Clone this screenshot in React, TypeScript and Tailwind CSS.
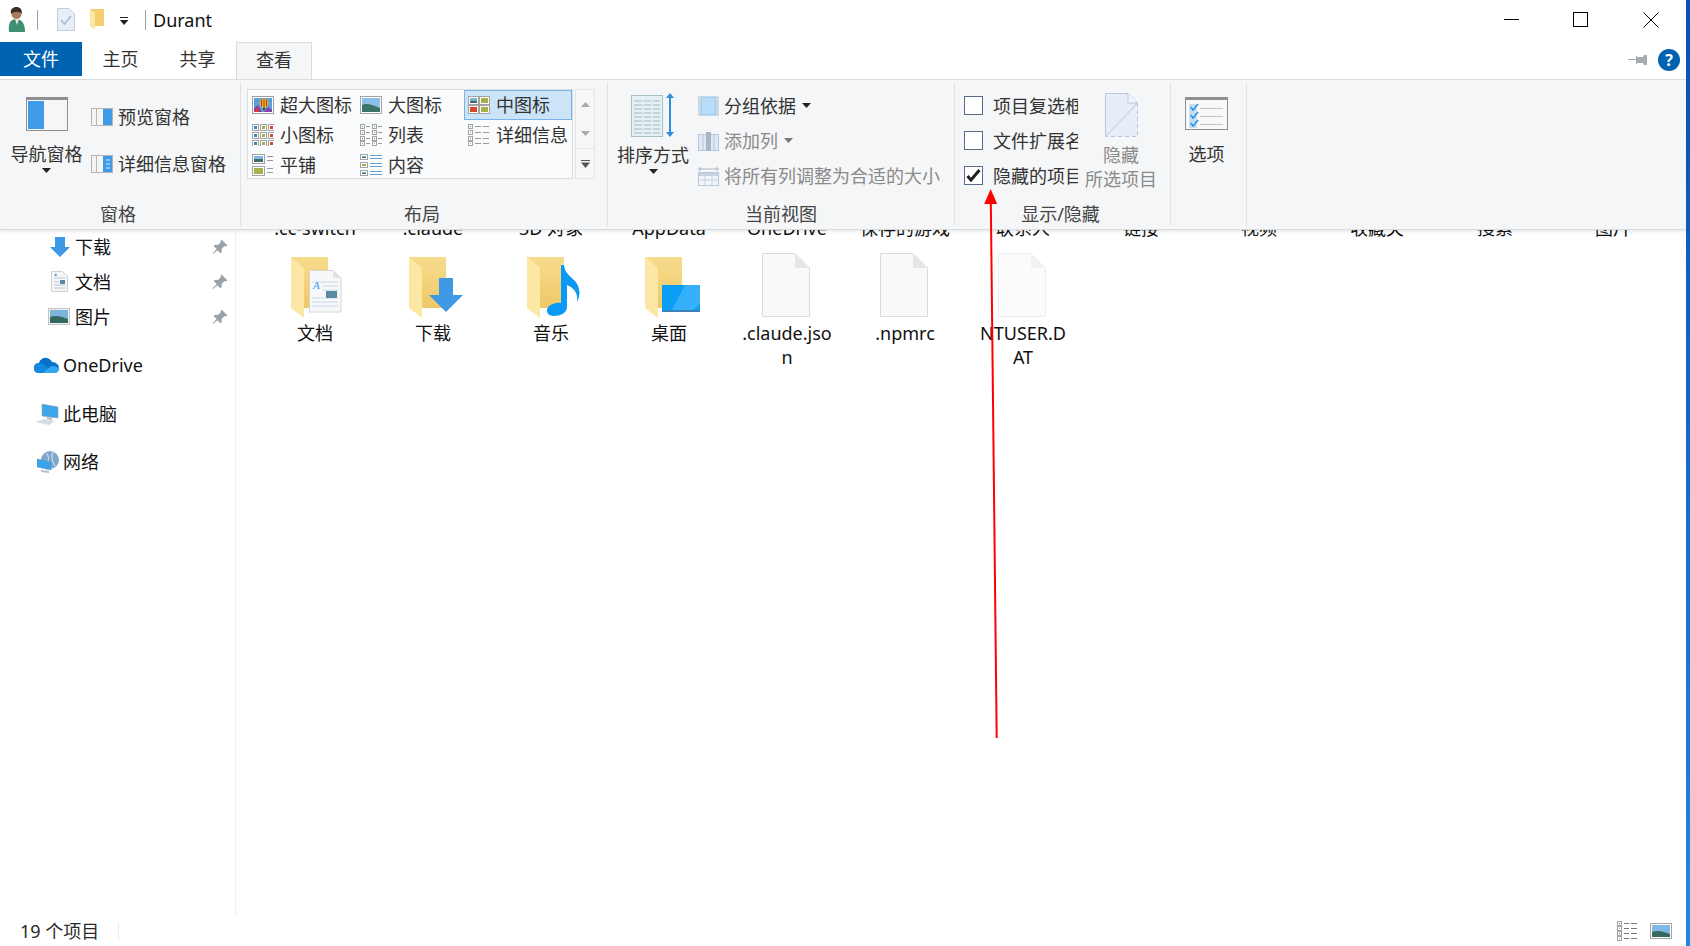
import React from "react";

const Caret = ({ gray }: { gray?: boolean }) => (
  <svg width="9" height="5" viewBox="0 0 9 5" className="shrink-0">
    <path d="M0 0h9L4.5 5z" fill={gray ? "#777" : "#222"} />
  </svg>
);

// little framed picture used all over the ribbon
const Pic = ({ x, y, w, h, kind = "land" }: { x: number; y: number; w: number; h: number; kind?: string }) => (
  <g>
    <rect x={x + 0.5} y={y + 0.5} width={w - 1} height={h - 1} fill="#fff" stroke="#a3a3a3" />
    {kind === "land" && (
      <>
        <rect x={x + 2} y={y + 2} width={w - 4} height={(h - 4) / 2} fill="#7db9e4" />
        <rect x={x + 2} y={y + 2 + (h - 4) / 2} width={w - 4} height={(h - 4) / 2} fill="#3d6f6a" />
      </>
    )}
    {kind === "red" && <rect x={x + 2} y={y + 2} width={w - 4} height={h - 4} fill="#d24a2a" />}
    {kind === "flower" && <rect x={x + 2} y={y + 2} width={w - 4} height={h - 4} fill="#a8b04a" />}
    {kind === "blue" && <rect x={x + 2} y={y + 2} width={w - 4} height={h - 4} fill="#3f86b8" />}
  </g>
);

const Lines = ({ x, ys, w, color = "#9a9a9a" }: { x: number; ys: number[]; w: number; color?: string }) => (
  <g stroke={color}>
    {ys.map((y) => (
      <line key={y} x1={x} x2={x + w} y1={y + 0.5} y2={y + 0.5} />
    ))}
  </g>
);

const IconXL = () => (
  <svg width="22" height="18" viewBox="0 0 22 18">
    <rect x="0.5" y="0.5" width="21" height="17" fill="#fff" stroke="#9c9c9c" />
    <rect x="2" y="2" width="18" height="14" fill="#5aa0d8" />
    <path d="M2 16v-4l4-3 4 7zM12 16l4-5 4 3v2z" fill="#8a3fa8" />
    <path d="M2 16l3-5 3 5z" fill="#d43a3a" />
    <circle cx="12" cy="7" r="4.5" fill="#e8b32a" />
    <path d="M12 2.500v9M9.500 4v6M14.500 4v6" stroke="#b0361f" />
    <rect x="11" y="12" width="2" height="2" fill="#5a3f2e" />
  </svg>
);
const IconL = () => (
  <svg width="22" height="18" viewBox="0 0 22 18">
    <rect x="0.5" y="0.5" width="21" height="17" fill="#fff" stroke="#a3a3a3" />
    <rect x="2" y="2" width="18" height="14" fill="#8cc0e6" />
    <path d="M2 9c4-2 8-1 18 3v4H2z" fill="#3a7468" />
  </svg>
);
const IconM = () => (
  <svg width="22" height="18" viewBox="0 0 22 18">
    <Pic x={0} y={0} w={11} h={9} />
    <Pic x={11} y={0} w={11} h={9} kind="flower" />
    <Pic x={0} y={9} w={11} h={9} kind="red" />
    <Pic x={11} y={9} w={11} h={9} kind="flower" />
  </svg>
);
const IconS = () => (
  <svg width="22" height="22" viewBox="0 0 22 22">
    {[0, 8, 16].map((y) =>
      [0, 8, 16].map((x, i) => <Pic key={`${x}-${y}`} x={x} y={y} w={7} h={7} kind={["blue", "flower", "red"][i]} />)
    )}
  </svg>
);
const IconList = () => (
  <svg width="22" height="22" viewBox="0 0 22 22">
    {[0, 12].map((x) => (
      <g key={x}>
        {[0, 6, 12, 17].map((y, i) => (
          <Pic key={y} x={x} y={y} w={5} h={5} kind={["blue", "flower", "red", "flower"][i]} />
        ))}
        <Lines x={x + 6} ys={[2, 8, 14, 19]} w={4} />
      </g>
    ))}
  </svg>
);
const IconDetails = () => (
  <svg width="22" height="22" viewBox="0 0 22 22">
    {[0, 6, 12, 17].map((y, i) => (
      <Pic key={y} x={0} y={y} w={5} h={5} kind={["blue", "flower", "red", "flower"][i]} />
    ))}
    <Lines x={7} ys={[2, 8, 14, 19]} w={6} />
    <Lines x={15} ys={[2, 8, 14, 19]} w={6} />
  </svg>
);
const IconTiles = () => (
  <svg width="22" height="22" viewBox="0 0 22 22">
    <Pic x={0} y={0} w={13} h={10} />
    <Pic x={0} y={12} w={13} h={10} kind="flower" />
    <Lines x={15} ys={[2, 6, 14, 18]} w={6} />
  </svg>
);
const IconContent = () => (
  <svg width="22" height="22" viewBox="0 0 22 22">
    <Pic x={0} y={0} w={8} h={6} />
    <Pic x={0} y={8} w={8} h={6} kind="flower" />
    <Pic x={0} y={16} w={8} h={6} />
    <Lines x={10} ys={[1, 4, 9, 12, 17, 20]} w={12} color="#6f9fd8" />
  </svg>
);

const NavPaneIcon = () => (
  <svg width="42" height="34" viewBox="0 0 42 34">
    <rect x="0.5" y="0.5" width="41" height="33" fill="#f6f6f6" stroke="#8f8f8f" />
    <rect x="0" y="0" width="42" height="3" fill="#8f8f8f" />
    <rect x="2" y="4" width="16" height="28" fill="#3f9be6" />
  </svg>
);
const PreviewIcon = ({ details }: { details?: boolean }) => (
  <svg width="22" height="18" viewBox="0 0 22 18">
    <rect x="0.5" y="0.5" width="21" height="17" fill="#f5f5f5" stroke="#b5b5b5" />
    <rect x="5" y="1" width="1" height="16" fill="#bbb" />
    <rect x="12" y="1" width="9" height="16" fill="#3f9be6" />
    {details && <path d="M15 5h4M15 9h4M15 13h4" stroke="#dceefb" />}
  </svg>
);
const SortIcon = () => (
  <svg width="44" height="46" viewBox="0 0 44 46">
    <rect x="0.5" y="3.5" width="31" height="41" fill="#e4f0f3" stroke="#a9c0c6" />
    <path d="M3 9h26M3 13h26M3 17h26M3 21h26M3 25h26M3 29h26M3 33h26M3 37h26M3 41h26" stroke="#a7b9bd" strokeDasharray="8 1.5" />
    <path d="M39 1l4 5h-3v34h3l-4 5-4-5h3V6h-3z" fill="#2f8ddb" />
  </svg>
);
const GroupIcon = () => (
  <svg width="21" height="22" viewBox="0 0 21 22">
    <rect x="3" y="2" width="15" height="18" fill="#b7dcfa" stroke="#8bbde6" />
    <path d="M1 1v20M20 1v20" stroke="#b5b5b5" />
  </svg>
);
const AddColIcon = () => (
  <svg width="21" height="20" viewBox="0 0 21 20">
    <rect x="0.5" y="3.5" width="20" height="16" fill="#dfe8f4" stroke="#b9c8dc" />
    <rect x="8" y="1" width="5" height="19" fill="#a9b6c8" />
    <path d="M5 4v15M16 4v15" stroke="#b9c8dc" />
  </svg>
);
const FitIcon = () => (
  <svg width="21" height="20" viewBox="0 0 21 20">
    <path d="M0 3h21M2 1v4M19 1v4" stroke="#a9b6c8" />
    <rect x="0.5" y="6.5" width="20" height="13" fill="#f1f4f8" stroke="#b9c8dc" />
    <rect x="1" y="7" width="19" height="3" fill="#c5d2e2" />
    <path d="M7 10v9M14 10v9M1 14h19" stroke="#c5d2e2" />
  </svg>
);
const HideIcon = () => (
  <svg width="33" height="44" viewBox="0 0 33 44">
    <path d="M0.5 0.5H23L32.5 10V43.5H0.5z" fill="#e7eefa" />
    <path d="M0.5 43.5V0.5H23L32.5 10L0.5 43.5" fill="none" stroke="#b9c6dd" />
    <path d="M32.5 10V43.5H0.5" fill="none" stroke="#b9c6dd" strokeDasharray="4 3" />
    <path d="M23 0.5V10H32.5" fill="#f4f7fc" stroke="#b9c6dd" />
  </svg>
);
const OptionsIcon = () => (
  <svg width="43" height="33" viewBox="0 0 43 33">
    <rect x="0.5" y="0.5" width="42" height="32" fill="#f8f8f8" stroke="#8f8f8f" />
    <rect x="0" y="0" width="43" height="3" fill="#8f8f8f" />
    {[8, 16, 24].map((y) => (
      <g key={y}>
        <rect x="5" y={y} width="6" height="6" fill="#cfe6fa" stroke="#9cc6ea" />
        <path d={`M6 ${y + 2}l2 3 5-6`} fill="none" stroke="#2f8ddb" strokeWidth="1.5" />
        <line x1="15" x2="38" y1={y + 3.5} y2={y + 3.5} stroke="#c4c4c4" />
      </g>
    ))}
  </svg>
);

const Check = ({ checked }: { checked?: boolean }) => (
  <div className="flex h-[19px] w-[19px] shrink-0 items-center justify-center border border-[#5a6a8a] bg-white">
    {checked && (
      <svg width="15" height="13" viewBox="0 0 15 13">
        <path d="M1.5 7l3.5 4 8.5-10" fill="none" stroke="#222" strokeWidth="3" />
      </svg>
    )}
  </div>
);

const PinSide = () => (
  <svg width="16" height="16" viewBox="0 0 16 16">
    <path d="M9.5 0.5l6 6-2 1-1-0.5-3 3 0.3 3-1.3 1.3-3-3L1 15l-0.5-0.5 4.2-4.5-3-3L3 5.700l3 0.300 3-3L8.500 2z" fill="#98a0a8" />
  </svg>
);

const Folder = ({ children }: { children?: React.ReactNode }) => (
  <svg width="62" height="62" viewBox="0 0 62 62">
    <defs>
      <linearGradient id="fb" x1="0" y1="0" x2="0" y2="1">
        <stop offset="0" stopColor="#f7dc8d" />
        <stop offset="1" stopColor="#efc867" />
      </linearGradient>
    </defs>
    <rect x="0" y="0" width="37" height="51" fill="url(#fb)" />
    <path d="M0 0l13 11v50L0 51z" fill="#fde7a4" />
    {children}
  </svg>
);

const FileIcon = ({ faded }: { faded?: boolean }) => (
  <svg width="48" height="64" viewBox="0 0 48 64" className={faded ? "opacity-50" : ""}>
    <path d="M0.500 0.500H33L47.500 15V63.500H0.500z" fill="#f9f9fa" stroke="#dcdcdc" />
    <path d="M33 0.500V15H47.500z" fill="#e6e6e6" />
  </svg>
);

const docOverlay = (
  <g>
    <path d="M18.500 13.500H42L50 21V55H18.500z" fill="#f7f8fa" stroke="#d6d6d6" />
    <path d="M42 13.500V21H50z" fill="#e2e2e2" />
    <path d="M21 25h26M32 29h15M32 33h15M21 41h26M21 45h26M21 49h26" stroke="#c8d8e6" />
    <text x="22" y="32" fontSize="11" fontStyle="italic" fontFamily="'Liberation Serif',serif" fill="#3f9be6">A</text>
    <rect x="35" y="34" width="11" height="7" fill="#5a8aa0" />
  </g>
);
const downOverlay = <path d="M30 21h14v17h10L37 55 20 38h10z" fill="#3f98e4" />;
const musicOverlay = (
  <path d="M37 8c1 8 5 10 11 16 5 6 6 14 2 21 1-7-1-13-10-17v22c0 6-7 9-13 9-5 0-7-3-7-5 0-5 6-9 14-8V8z" fill="#0a9af5" />
);
const desktopOverlay = (
  <g>
    <rect x="17" y="28" width="38" height="27" fill="#0a9ef7" />
    <path d="M40 28h15v19l-9 8H26z" fill="#37b0fa" />
    <rect x="17" y="53" width="38" height="2" fill="#3d7fb8" />
  </g>
);

const topRow = [".cc-switch", ".claude", "3D 对象", "AppData", "OneDrive", "保存的游戏", "联系人", "链接", "视频", "收藏夹", "搜索", "图片"];

const files: { name: string; icon: React.ReactNode; folder?: boolean }[] = [
  { name: "文档", icon: <Folder>{docOverlay}</Folder>, folder: true },
  { name: "下载", icon: <Folder>{downOverlay}</Folder>, folder: true },
  { name: "音乐", icon: <Folder>{musicOverlay}</Folder>, folder: true },
  { name: "桌面", icon: <Folder>{desktopOverlay}</Folder>, folder: true },
  { name: ".claude.json", icon: <FileIcon /> },
  { name: ".npmrc", icon: <FileIcon /> },
  { name: "NTUSER.DAT", icon: <FileIcon faded /> },
];

const gallery = [
  { label: "超大图标", icon: <IconXL /> },
  { label: "大图标", icon: <IconL /> },
  { label: "中图标", icon: <IconM />, active: true },
  { label: "小图标", icon: <IconS /> },
  { label: "列表", icon: <IconList /> },
  { label: "详细信息", icon: <IconDetails /> },
  { label: "平铺", icon: <IconTiles /> },
  { label: "内容", icon: <IconContent /> },
];

const QuickRow = ({ icon, label }: { icon: React.ReactNode; label: string }) => (
  <div className="flex h-[35px] items-center">
    <div className="flex w-[75px] shrink-0 justify-end pr-[5px]">{icon}</div>
    <span className="flex-1">{label}</span>
    <div className="mr-[7px]">
      <PinSide />
    </div>
  </div>
);

const NavRow = ({ icon, label, className }: { icon: React.ReactNode; label: string; className: string }) => (
  <div className={`flex h-9 items-center ${className}`}>
    <div className="flex w-[63px] shrink-0 justify-end pr-[4px]">{icon}</div>
    <span>{label}</span>
  </div>
);

export default function App() {
  return (
    <div className="relative flex h-[946px] w-[1690px] overflow-hidden bg-white font-['Noto_Sans','Noto_Sans_CJK_SC',sans-serif] text-[18px] leading-6 text-[#1a1a1a]">
      <div className="flex min-w-0 flex-1 flex-col">
        {/* title bar */}
        <div className="flex h-[42px] shrink-0 items-center pb-[3px]">
          <svg width="18" height="26" viewBox="0 0 18 26" className="ml-[8px]">
            <path d="M1 25c-1-8 1-13 7-13s9 5 9 13z" fill="#3f9070" />
            <circle cx="8.500" cy="7" r="5" fill="#a87a5c" />
            <path d="M3 7c-1-5 2-7 5.500-7S14 2 14 7c-2-3-8-3-11 0z" fill="#3a2c22" />
            <path d="M7 12l2 6 2-6z" fill="#e8e8e8" />
          </svg>
          <div className="ml-[11px] h-5 w-px bg-[#a0a0a0]" />
          <svg width="18" height="23" viewBox="0 0 18 23" className="ml-[19px]">
            <path d="M0.500 0.500H12L17.500 6V22.500H0.500z" fill="#e8eef8" stroke="#c2cde0" />
            <path d="M4 12l3.500 4L14 8" fill="none" stroke="#a8b8d2" strokeWidth="1.600" />
          </svg>
          <svg width="14" height="21" viewBox="0 0 14 21" className="ml-[15px]">
            <rect width="14" height="17" fill="#f3cd6e" />
            <path d="M0 0l5 4v17l-5-4z" fill="#fde7a4" />
          </svg>
          <svg width="11" height="9" viewBox="0 0 11 9" className="ml-[15px] mt-[4px]">
            <path d="M1 0h8v1H1zM1 3h8.500L5 8z" fill="#222" />
          </svg>
          <div className="ml-[15px] h-5 w-px bg-[#a0a0a0]" />
          <span className="ml-[7px] text-[#111]">Durant</span>
          <div className="ml-auto flex h-full">
            <div className="flex w-[70px] items-center justify-center">
              <div className="h-px w-[15px] bg-black" />
            </div>
            <div className="flex w-[69px] items-center justify-center">
              <div className="h-[15px] w-[15px] border border-black" />
            </div>
            <div className="flex w-[71px] items-center justify-center">
              <svg width="16" height="16" viewBox="0 0 16 16">
                <path d="M0.500 0.500l15 15M15.500 0.500l-15 15" stroke="#000" fill="none" />
              </svg>
            </div>
          </div>
        </div>

        {/* ribbon tabs */}
        <div className="flex h-[37px] shrink-0 items-start">
          <div className="flex h-[34px] w-[82px] items-center justify-center bg-[#0063b1] text-white">文件</div>
          <div className="flex h-[34px] w-[77px] items-center justify-center text-[#333]">主页</div>
          <div className="flex h-[34px] w-[77px] items-center justify-center text-[#333]">共享</div>
          <div className="flex h-[38px] w-[76px] items-center justify-center border border-b-0 border-[#dadbdc] bg-[#f5f6f7] pb-[4px] text-[#333]">查看</div>
          <svg width="20" height="12" viewBox="0 0 20 12" className="ml-auto mt-[12px]">
            <path d="M0 5h8V6H0zM8 2h1v8H8zM9 3h6l1-2h3v10h-3l-1-2H9z" fill="#a4adb3" />
          </svg>
          <div className="ml-[10px] mr-[6px] mt-[7px] flex h-[22px] w-[22px] items-center justify-center rounded-full bg-[#0063b1] text-[16px] font-bold text-white">?</div>
        </div>

        {/* ribbon */}
        <div className="relative z-10 flex h-[151px] shrink-0 border-y border-[#dadbdc] bg-[#f5f6f7] text-[#333] shadow-[0_2px_3px_rgba(0,0,0,0.08)]">
          <section className="my-[3px] flex w-[241px] shrink-0 flex-col border-r border-[#e1e2e3]">
            <div className="flex flex-1">
              <div className="flex w-[91px] shrink-0 flex-col items-center pl-[2px] pt-[14px]">
                <NavPaneIcon />
                <span className="mt-[11px]">导航窗格</span>
                <div className="mt-[2px]"><Caret /></div>
              </div>
              <div className="flex flex-col gap-[23px] pt-[22px]">
                <div className="flex items-center gap-[5px]"><PreviewIcon />预览窗格</div>
                <div className="flex items-center gap-[5px]"><PreviewIcon details />详细信息窗格</div>
              </div>
            </div>
            <div className="h-[24px] pr-[4px] text-center text-[#444]">窗格</div>
          </section>

          <section className="my-[3px] flex w-[367px] shrink-0 flex-col border-r border-[#e1e2e3]">
            <div className="flex flex-1 pl-[6px] pt-[6px]">
              <div className="grid h-[90px] w-[326px] grid-cols-[108px_108px_108px] grid-rows-[30px_30px_30px] border border-[#dadbdc] bg-[#fafbfc]">
                {gallery.map((g) => (
                  <div
                    key={g.label}
                    className={`flex items-center border pl-[3px] ${g.active ? "border-[#7ab3ea] bg-[#cce4f7]" : "border-transparent"}`}
                  >
                    <div className="flex w-[28px] shrink-0">{g.icon}</div>
                    <span className="whitespace-nowrap">{g.label}</span>
                  </div>
                ))}
              </div>
              <div className="ml-[2px] flex h-[90px] w-[20px] flex-col items-center border border-[#e4e5e6]">
                <div className="flex h-[29px] w-full items-center justify-center">
                  <svg width="9" height="5" viewBox="0 0 9 5"><path d="M0 5h9L4.500 0z" fill="#a8a8a8" /></svg>
                </div>
                <div className="flex h-[29px] w-full items-center justify-center">
                  <svg width="9" height="5" viewBox="0 0 9 5"><path d="M0 0h9L4.500 5z" fill="#a8a8a8" /></svg>
                </div>
                <div className="flex h-[30px] w-full items-center justify-center border-t border-[#e4e5e6]">
                  <svg width="11" height="8" viewBox="0 0 11 8"><path d="M1 0h9v1H1zM1 2.500h9L5.500 8z" fill="#555" /></svg>
                </div>
              </div>
            </div>
            <div className="h-[24px] pr-[4px] text-center text-[#444]">布局</div>
          </section>

          <section className="my-[3px] flex w-[347px] shrink-0 flex-col border-r border-[#e1e2e3]">
            <div className="flex flex-1">
              <div className="flex w-[90px] shrink-0 flex-col items-center pt-[9px]">
                <SortIcon />
                <span className="mt-[5px]">排序方式</span>
                <div className="mt-[2px]"><Caret /></div>
              </div>
              <div className="flex flex-col pt-[5px]">
                <div className="flex h-[35px] items-center">
                  <GroupIcon />
                  <span className="ml-[5px]">分组依据</span>
                  <div className="ml-[6px]"><Caret /></div>
                </div>
                <div className="flex h-[35px] items-center text-[#8a8a8a]">
                  <AddColIcon />
                  <span className="ml-[5px]">添加列</span>
                  <div className="ml-[6px]"><Caret gray /></div>
                </div>
                <div className="flex h-[35px] items-center whitespace-nowrap text-[#8a8a8a]">
                  <FitIcon />
                  <span className="ml-[5px]">将所有列调整为合适的大小</span>
                </div>
              </div>
            </div>
            <div className="h-[24px] text-center text-[#444]">当前视图</div>
          </section>

          <section className="my-[3px] flex w-[216px] shrink-0 flex-col border-r border-[#e1e2e3]">
            <div className="flex flex-1">
              <div className="flex w-[124px] shrink-0 flex-col pl-[9px] pt-[5px]">
                {[
                  { label: "项目复选框", checked: false },
                  { label: "文件扩展名", checked: false },
                  { label: "隐藏的项目", checked: true },
                ].map((c) => (
                  <div key={c.label} className="flex h-[35px] items-center">
                    <Check checked={c.checked} />
                    <span className="ml-[10px] w-[85px] overflow-hidden whitespace-nowrap">{c.label}</span>
                  </div>
                ))}
              </div>
              <div className="ml-[2px] flex w-[80px] shrink-0 flex-col items-center pt-[10px] text-[#8a8a8a]">
                <HideIcon />
                <span className="mt-[6px]">隐藏</span>
                <span>所选项目</span>
              </div>
            </div>
            <div className="h-[24px] pr-[4px] text-center text-[#444]">显示/隐藏</div>
          </section>

          <section className="my-[3px] flex w-[76px] shrink-0 flex-col items-center border-r border-[#e1e2e3] pr-[4px] pt-[14px]">
            <OptionsIcon />
            <span className="mt-[12px]">选项</span>
          </section>
        </div>

        {/* body */}
        <div className="flex min-h-0 flex-1">
          <aside className="-mt-px w-[236px] shrink-0 border-r border-[#f0f0f0] text-[#111]">
            <QuickRow
              label="下载"
              icon={
                <svg width="20" height="20" viewBox="0 0 20 20">
                  <path d="M5 0h10v10h5L10 20 0 10h5z" fill="#3f98e4" />
                </svg>
              }
            />
            <QuickRow
              label="文档"
              icon={
                <svg width="17" height="21" viewBox="0 0 17 21" className="mr-[2px]">
                  <path d="M0.500 0.500H11L16.500 5V20.500H0.500z" fill="#f5f6f8" stroke="#cfcfcf" />
                  <path d="M3 7h11M3 11h5M3 14h11M3 17h11" stroke="#b8c8d8" />
                  <rect x="9" y="9" width="5" height="4" fill="#5a8aa0" />
                  <path d="M3 5l2-3 1 3z" fill="#3f9be6" />
                </svg>
              }
            />
            <QuickRow
              label="图片"
              icon={
                <svg width="22" height="17" viewBox="0 0 22 17">
                  <rect x="0.500" y="0.500" width="21" height="16" fill="#f0f0f0" stroke="#c4c4c4" />
                  <rect x="2" y="2" width="18" height="13" fill="#7db4dc" />
                  <path d="M2 9c5-2 10-1 18 2v4H2z" fill="#35685f" />
                </svg>
              }
            />
            <NavRow
              className="mt-[13px]"
              label="OneDrive"
              icon={
                <svg width="25" height="16" viewBox="0 0 25 16">
                  <path d="M5 16C1 16 0 13 0 11c0-3 2-5 5-5 1-4 5-6 8-5 2 .5 4 2 5 4 4 0 7 3 7 6 0 3-2 5-5 5z" fill="#0a6fc8" />
                  <path d="M5 16C1 16 0 13 0 11c0-3 2-5 5-5 3 0 6 2 8 4l6 6z" fill="#0f8ae0" />
                  <path d="M9 16l7-6c2-2 5-1 9 1 0 3-2 5-5 5z" fill="#35a8ee" />
                </svg>
              }
            />
            <NavRow
              className="mt-[13px]"
              label="此电脑"
              icon={
                <svg width="24" height="21" viewBox="0 0 24 21">
                  <path d="M7 0l16 3v11L7 12z" fill="#3fa5ea" stroke="#8a9aa8" strokeWidth="0.500" />
                  <path d="M12 13l5 1v2l-5-1z" fill="#b0b8c0" />
                  <path d="M0 18l9-3 11 2-6 4z" fill="#d8dcdf" />
                </svg>
              }
            />
            <NavRow
              className="mt-3"
              label="网络"
              icon={
                <svg width="22" height="22" viewBox="0 0 22 22">
                  <circle cx="13" cy="9" r="9" fill="#7fa8cf" />
                  <path d="M9 2c3 2 3 6 1 12M16 1c-2 4-1 9 2 14" stroke="#dfe9f2" fill="none" />
                  <path d="M0 8l14 3v8L0 16z" fill="#38a4ec" stroke="#6a8ba8" strokeWidth="0.500" />
                  <path d="M4 19l8 1v2l-8-1z" fill="#b8c0c8" />
                </svg>
              }
            />
          </aside>

          <main className="min-w-0 flex-1 overflow-hidden pl-[20px] text-[#111]">
            <div className="-mt-[14px] mb-[13px] flex">
              {topRow.map((t) => (
                <div key={t} className="w-[118px] shrink-0 text-center">{t}</div>
              ))}
            </div>
            <div className="flex">
              {files.map((f) => (
                <div key={f.name} className="flex w-[118px] shrink-0 flex-col items-center">
                  <div className={`flex h-[68px] w-full items-start justify-center ${f.folder ? "pl-[13px] pt-[4px]" : "pr-[3px]"}`}>{f.icon}</div>
                  <div className="w-[94px] break-all text-center">{f.name}</div>
                </div>
              ))}
            </div>
          </main>
        </div>

        {/* status bar */}
        <footer className="flex h-[31px] shrink-0 items-center text-[#2b2b2b]">
          <span className="ml-[20px]">19 个项目</span>
          <div className="ml-[19px] h-[18px] w-px bg-[#ececec]" />
          <svg width="21" height="20" viewBox="0 0 21 20" className="ml-auto">
            {[0, 5, 10, 15].map((y, i) => (
              <Pic key={y} x={0} y={y} w={5} h={5} kind={["blue", "flower", "red", "flower"][i]} />
            ))}
            <Lines x={7} ys={[2, 7, 12, 17]} w={5} color="#777" />
            <Lines x={14} ys={[2, 7, 12, 17]} w={6} color="#777" />
          </svg>
          <svg width="22" height="16" viewBox="0 0 22 16" className="ml-[12px] mr-[14px]">
            <rect x="0.500" y="0.500" width="21" height="15" fill="#fff" stroke="#a3a3a3" />
            <rect x="2" y="2" width="18" height="12" fill="#7db9e4" />
            <path d="M2 9c5-2 10-1 18 2v3H2z" fill="#35685f" />
          </svg>
        </footer>
      </div>

      {/* desktop sliver at the right edge */}
      <div className="h-full w-[4px] shrink-0 bg-gradient-to-b from-[#0b4fb0] to-[#2188de]" />

      {/* hand drawn annotation */}
      <svg className="pointer-events-none absolute inset-0 z-20" width="1690" height="946" viewBox="0 0 1690 946">
        <line x1="996.700" y1="738" x2="990.800" y2="200" stroke="#ff0000" strokeWidth="2" />
        <path d="M990.700 189l6.500 15h-13z" fill="#ff0000" />
      </svg>
    </div>
  );
}
